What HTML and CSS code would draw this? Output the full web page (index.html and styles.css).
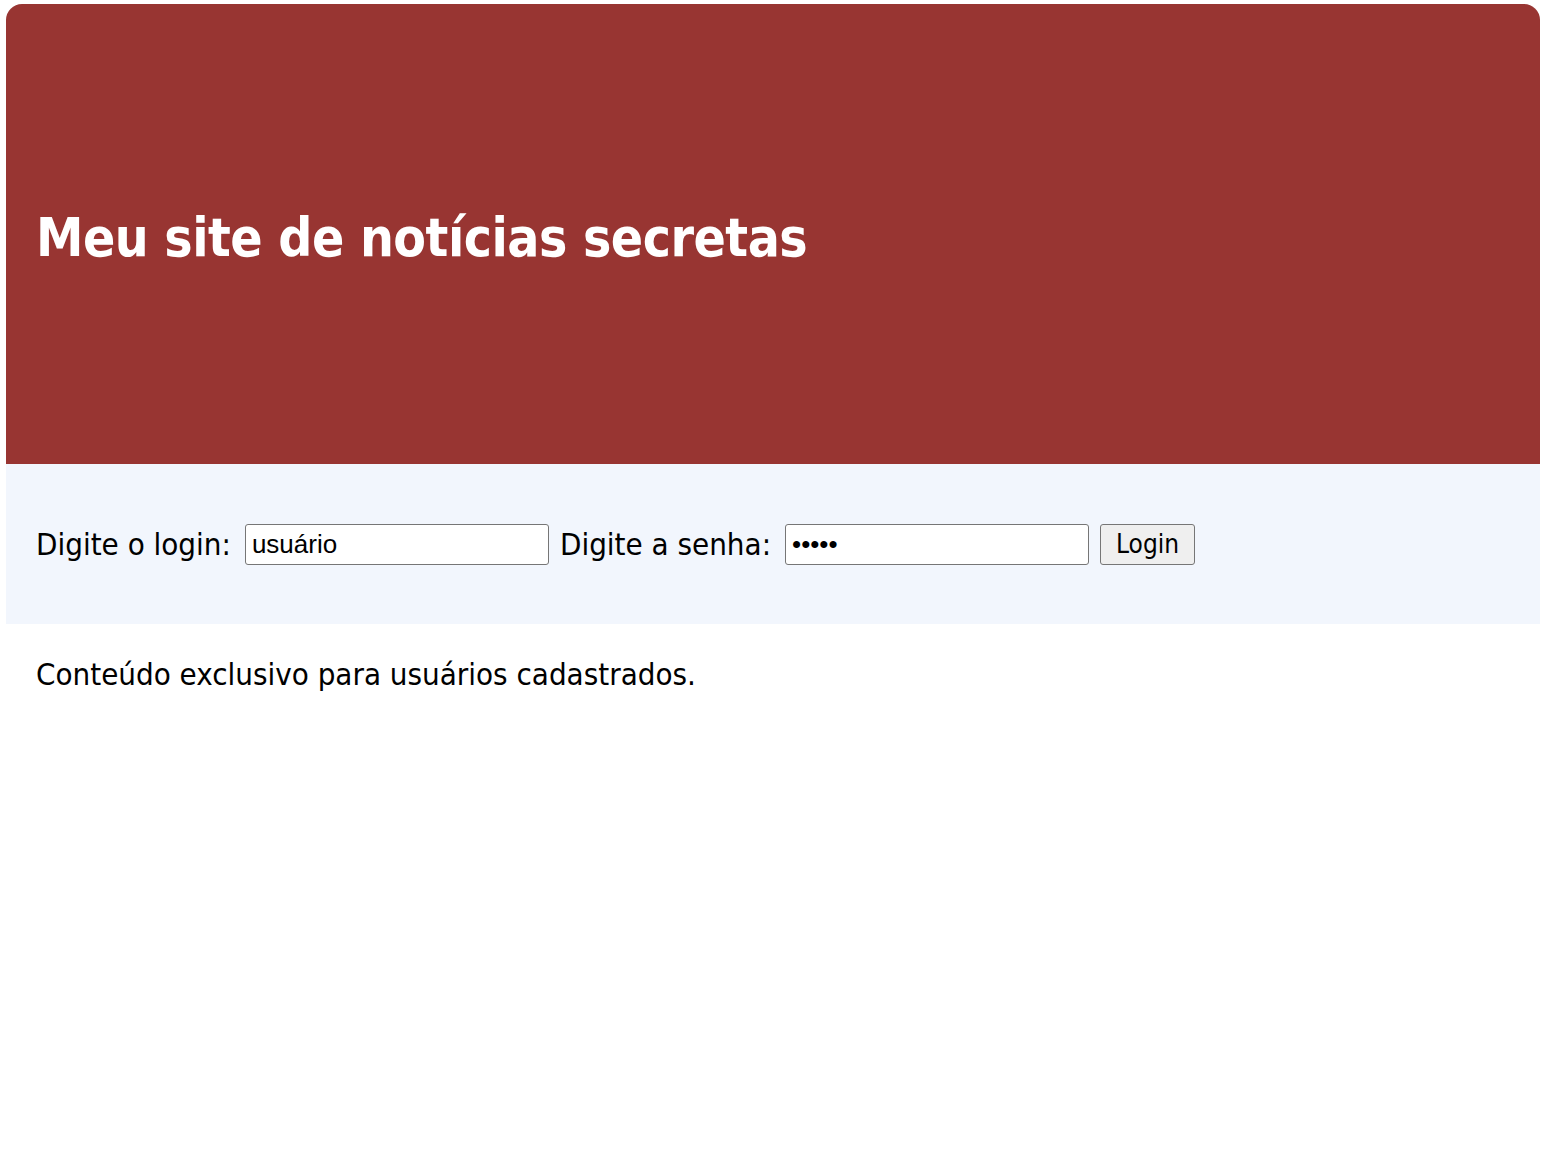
FILE: index.html
```html
<!DOCTYPE html>
<html lang="pt-BR">
<head>
<meta charset="utf-8">
<title>Meu site de notícias secretas</title>
<link rel="stylesheet" href="styles.css">
</head>
<body>
<header class="site-header">
  <h1 class="site-title">Meu site de notícias secretas</h1>
</header>
<form class="login-bar">
  <label class="login-label" for="login">Digite o login:</label>
  <input class="login-input" id="login" type="text" value="usuário">
  <label class="login-label" for="senha">Digite a senha:</label>
  <input class="login-input" id="senha" type="password" value="12345">
  <button class="login-button" type="button">Login</button>
</form>
<main class="content">
  <p class="content-text">Conteúdo exclusivo para usuários cadastrados.</p>
</main>
</body>
</html>
```

FILE: styles.css
```css
html, body {
  margin: 0;
  padding: 0;
  background: #ffffff;
}

body {
  padding: 4px 8px 0 6px;
  font-family: "DejaVu Sans Condensed", "DejaVu Sans", sans-serif;
  color: #000000;
}

.site-header {
  height: 460px;
  background: #983532;
  border-radius: 16px 16px 0 0;
  display: flex;
  align-items: center;
  padding: 0 30px;
  box-sizing: border-box;
}

.site-title {
  margin: 0;
  color: #ffffff;
  font-size: 53px;
  font-weight: bold;
  letter-spacing: -0.5px;
  padding-top: 6px;
}

.login-bar {
  height: 160px;
  background: #f2f6fd;
  display: flex;
  align-items: center;
  padding: 0 30px;
  box-sizing: border-box;
  margin: 0;
}

.login-label {
  font-size: 31px;
  margin-right: 14px;
}

.login-input {
  width: 304px;
  height: 41px;
  box-sizing: border-box;
  border: 1px solid #767676;
  border-radius: 3px;
  padding: 0 6px;
  font-family: "Liberation Sans", Arial, sans-serif;
  font-size: 26px;
  color: #000000;
  background: #ffffff;
  margin-right: 11px;
}

.login-button {
  height: 41px;
  width: 95px;
  box-sizing: border-box;
  border: 1px solid #767676;
  border-radius: 3px;
  background: #efefef;
  font-family: "DejaVu Sans Condensed", "DejaVu Sans", sans-serif;
  font-size: 26px;
  color: #000000;
  padding: 0;
}

.content {
  padding: 32px 30px 0;
}

.content-text {
  margin: 0;
  font-size: 31px;
}
```
